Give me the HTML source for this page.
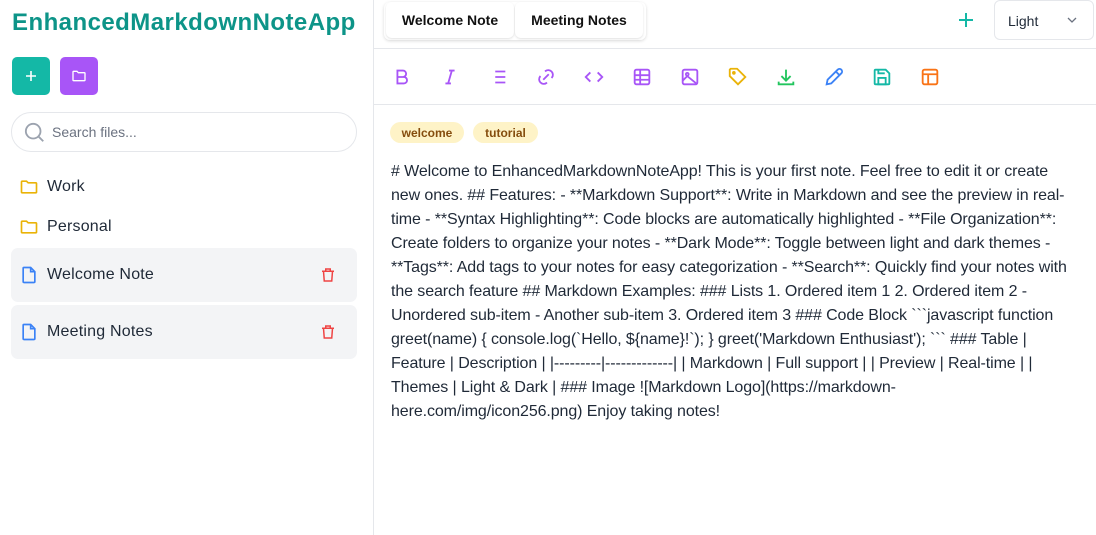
<!DOCTYPE html>
<html><head><meta charset="utf-8"><style>
*{box-sizing:border-box;margin:0;padding:0}
body{width:1096px;height:535px;overflow:hidden;background:#fff;font-family:"Liberation Sans",sans-serif;color:#1f2937;position:relative}
.side{position:absolute;left:0;top:0;width:374px;height:535px;border-right:1px solid #e5e7eb;background:#fff}
h1{position:absolute;left:12px;top:9px;font-size:24px;font-weight:bold;color:#0d9488;letter-spacing:0.45px;white-space:nowrap}
.btn{position:absolute;top:57px;width:38px;height:38px;border-radius:5px;display:flex;align-items:center;justify-content:center}
.search{position:absolute;left:11px;top:112px;width:346px;height:40px;border:1px solid #e5e7eb;border-radius:20px}
.search span{position:absolute;left:40px;top:11px;font-size:14px;color:#6b7280}
.item{position:absolute;left:11px;width:346px;height:54px;display:flex;align-items:center;font-size:16px;color:#1f2937}
.item svg{position:absolute}
.item .t{position:absolute;left:36px;letter-spacing:0.2px}
.sel{background:#f3f4f6;border-radius:7px}
.tabs{position:absolute;left:384px;top:2px;width:262px;height:38px;border-radius:6px;box-shadow:0 1px 3px rgba(0,0,0,.15)}
.tab{position:absolute;top:2px;height:36px;background:#fff;border-radius:6px;box-shadow:0 1px 2px rgba(0,0,0,.12);font-size:14px;font-weight:bold;color:#111;display:flex;align-items:center;justify-content:center}
.hl{position:absolute;left:374px;width:722px;height:1px;background:#e5e7eb}
.sel2{position:absolute;left:994px;top:0;width:100px;height:40px;border:1px solid #e5e7eb;border-radius:6px;font-size:14px;color:#1f2937}
.tb svg{position:absolute;top:66px}
.tag{position:absolute;top:122px;height:21px;border-radius:11px;background:#fef3c7;color:#854d0e;font-size:12px;font-weight:bold;display:flex;align-items:center;justify-content:center}
.txt{position:absolute;left:391px;top:160px;font-size:16px;line-height:24px;color:#1f2937;white-space:nowrap;letter-spacing:-0.1px}
</style></head><body>
<div class="side">
<h1>EnhancedMarkdownNoteApp</h1>
<div class="btn" style="left:12px;background:#14b8a6"><svg width="14" height="14" viewBox="0 0 14 14"><path d="M7 2v10M2 7h10" stroke="#fff" stroke-width="1.6"/></svg></div>
<div class="btn" style="left:60px;background:#a855f7"><svg width="16" height="16" viewBox="0 0 24 24" fill="none" stroke="#fff" stroke-width="2"><path d="M3 6a1 1 0 0 1 1-1h5l2 2h9a1 1 0 0 1 1 1v10a1 1 0 0 1-1 1H4a1 1 0 0 1-1-1z"/></svg></div>
<div class="search"><svg style="position:absolute;left:12px;top:9px" width="22" height="22" viewBox="0 0 24 24" fill="none" stroke="#9ca3af" stroke-width="2"><circle cx="10" cy="10" r="8"/><path d="M16 16l5 5"/></svg><span>Search files...</span></div>
<div class="item" style="top:160px"><svg style="left:8px" width="20" height="20" viewBox="0 0 24 24" fill="none" stroke="#eab308" stroke-width="2"><path d="M3 6a1 1 0 0 1 1-1h5l2 2h9a1 1 0 0 1 1 1v10a1 1 0 0 1-1 1H4a1 1 0 0 1-1-1z"/></svg><span class="t">Work</span></div>
<div class="item" style="top:200px"><svg style="left:8px" width="20" height="20" viewBox="0 0 24 24" fill="none" stroke="#eab308" stroke-width="2"><path d="M3 6a1 1 0 0 1 1-1h5l2 2h9a1 1 0 0 1 1 1v10a1 1 0 0 1-1 1H4a1 1 0 0 1-1-1z"/></svg><span class="t">Personal</span></div>
<div class="item sel" style="top:248px"><svg style="left:8px" width="20" height="20" viewBox="0 0 24 24" fill="none" stroke="#3b82f6" stroke-width="2"><path d="M6 3h8l5 5v12a1 1 0 0 1-1 1H6a1 1 0 0 1-1-1V4a1 1 0 0 1 1-1zM14 3v5h5"/></svg><span class="t">Welcome Note</span><svg style="left:308px" width="18" height="18" viewBox="0 0 24 24" fill="none" stroke="#ef4444" stroke-width="2"><path d="M4 7h16M9 7V4h6v3M6 7l1 13h10l1-13"/></svg></div>
<div class="item sel" style="top:305px"><svg style="left:8px" width="20" height="20" viewBox="0 0 24 24" fill="none" stroke="#3b82f6" stroke-width="2"><path d="M6 3h8l5 5v12a1 1 0 0 1-1 1H6a1 1 0 0 1-1-1V4a1 1 0 0 1 1-1zM14 3v5h5"/></svg><span class="t">Meeting Notes</span><svg style="left:308px" width="18" height="18" viewBox="0 0 24 24" fill="none" stroke="#ef4444" stroke-width="2"><path d="M4 7h16M9 7V4h6v3M6 7l1 13h10l1-13"/></svg></div>
</div>
<div class="tabs"></div>
<div class="tab" style="left:386px;width:128px">Welcome Note</div>
<div class="tab" style="left:515px;width:128px">Meeting Notes</div>
<svg style="position:absolute;left:958px;top:12px" width="16" height="16" viewBox="0 0 16 16"><path d="M8 1v14M1 8h14" stroke="#14b8a6" stroke-width="2"/></svg>
<div class="sel2"><span style="position:absolute;left:13px;top:12px">Light</span><svg style="position:absolute;left:72px;top:15px" width="10" height="8" viewBox="0 0 10 8"><path d="M1 2l4 4 4-4" fill="none" stroke="#6b7280" stroke-width="1.3"/></svg></div>
<div class="hl" style="top:48px"></div>
<div class="hl" style="top:104px"></div>
<div class="tb">
<svg style="left:391px" width="22" height="22" viewBox="0 0 24 24" fill="none" stroke="#a855f7" stroke-width="2"><path d="M7 5h6a3.5 3.5 0 0 1 0 7H7zM7 12h7a3.5 3.5 0 0 1 0 7H7z"/></svg>
<svg style="left:439px" width="22" height="22" viewBox="0 0 24 24" fill="none" stroke="#a855f7" stroke-width="2"><path d="M11 5h6M7 19h6M14 5l-4 14"/></svg>
<svg style="left:487px" width="22" height="22" viewBox="0 0 24 24" fill="none" stroke="#a855f7" stroke-width="2"><path d="M9 6h11M9 12h11M9 18h11M5 6v.01M5 12v.01M5 18v.01"/></svg>
<svg style="left:535px" width="22" height="22" viewBox="0 0 24 24" fill="none" stroke="#a855f7" stroke-width="2"><path d="M9 15l6-6M11 6l.5-.5a5 5 0 0 1 7 7L18 13M13 18l-.5.5a5 5 0 0 1-7-7L6 11"/></svg>
<svg style="left:583px" width="22" height="22" viewBox="0 0 24 24" fill="none" stroke="#a855f7" stroke-width="2"><path d="M8 7l-5 5 5 5M16 7l5 5-5 5"/></svg>
<svg style="left:631px" width="22" height="22" viewBox="0 0 24 24" fill="none" stroke="#a855f7" stroke-width="2"><rect x="4" y="4" width="16" height="16" rx="2"/><path d="M4 10h16M4 15h16M10 4v16"/></svg>
<svg style="left:679px" width="22" height="22" viewBox="0 0 24 24" fill="none" stroke="#a855f7" stroke-width="2"><rect x="4" y="4" width="16" height="16" rx="2"/><circle cx="9" cy="9" r="1.5"/><path d="M4 16l5-5 11 9"/></svg>
<svg style="left:727px" width="22" height="22" viewBox="0 0 24 24" fill="none" stroke="#eab308" stroke-width="2"><path d="M3 4v7l9 9 8-8-9-9H4z"/><circle cx="7.5" cy="7.5" r="1"/></svg>
<svg style="left:775px" width="22" height="22" viewBox="0 0 24 24" fill="none" stroke="#22c55e" stroke-width="2"><path d="M4 17v3h16v-3M12 4v12M7 11l5 5 5-5"/></svg>
<svg style="left:823px" width="22" height="22" viewBox="0 0 24 24" fill="none" stroke="#3b82f6" stroke-width="2"><path d="M4 20l1-5L16 4a2.1 2.1 0 0 1 4 4L9 19z M14 6l4 4"/></svg>
<svg style="left:871px" width="22" height="22" viewBox="0 0 24 24" fill="none" stroke="#14b8a6" stroke-width="2"><path d="M5 4h11l4 4v11a1 1 0 0 1-1 1H5a1 1 0 0 1-1-1V5a1 1 0 0 1 1-1z"/><rect x="8" y="13" width="8" height="7"/><path d="M8 4v4h7"/></svg>
<svg style="left:919px" width="22" height="22" viewBox="0 0 24 24" fill="none" stroke="#f97316" stroke-width="2"><rect x="4" y="4" width="16" height="16" rx="2"/><path d="M4 9h16M10 9v11"/></svg>
</div>
<div class="tag" style="left:390px;width:74px">welcome</div>
<div class="tag" style="left:473px;width:65px">tutorial</div>
<div class="txt"># Welcome to EnhancedMarkdownNoteApp! This is your first note. Feel free to edit it or create<br>new ones. ## Features: - **Markdown Support**: Write in Markdown and see the preview in real-<br>time - **Syntax Highlighting**: Code blocks are automatically highlighted - **File Organization**:<br>Create folders to organize your notes - **Dark Mode**: Toggle between light and dark themes -<br>**Tags**: Add tags to your notes for easy categorization - **Search**: Quickly find your notes with<br>the search feature ## Markdown Examples: ### Lists 1. Ordered item 1 2. Ordered item 2 -<br>Unordered sub-item - Another sub-item 3. Ordered item 3 ### Code Block &#96;&#96;&#96;javascript function<br>greet(name) { console.log(&#96;Hello, ${name}!&#96;); } greet('Markdown Enthusiast'); &#96;&#96;&#96; ### Table |<br>Feature | Description | |---------|-------------| | Markdown | Full support | | Preview | Real-time | |<br>Themes | Light &amp; Dark | ### Image ![Markdown Logo](https://markdown-<br>here.com/img/icon256.png) Enjoy taking notes!</div>
</body></html>
